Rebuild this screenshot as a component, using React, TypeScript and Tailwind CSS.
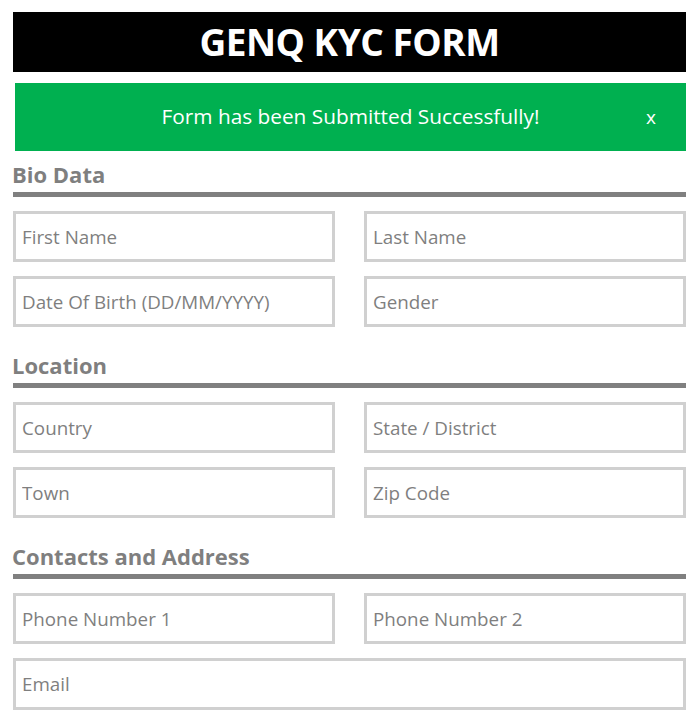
import React, { useState } from "react";

const Field: React.FC<{ placeholder: string; className?: string }> = ({ placeholder, className }) => (
  <input
    type="text"
    placeholder={placeholder}
    className={
      "h-[51px] w-full border-[3px] border-[#d0d0d0] bg-white px-[6px] text-[18.8px] text-[#595959] placeholder:text-[#7f7f7f] outline-none " +
      (className ?? "")
    }
  />
);

const Section: React.FC<{ title: string; children: React.ReactNode }> = ({ title, children }) => (
  <div>
    <h2 className="-ml-[1px] text-[22px] font-bold leading-[28px] text-[#7f7f7f]">{title}</h2>
    <div className="mt-[4px] h-[5px] bg-[#808080]" />
    <div className="mt-[14px] grid grid-cols-2 gap-x-[29px] gap-y-[14px]">{children}</div>
  </div>
);

const App: React.FC = () => {
  const [showAlert, setShowAlert] = useState(true);

  return (
    <div className="w-[699px] bg-white px-[13px] pt-[12px] pb-[10px]" style={{ fontFamily: '"Open Sans", sans-serif' }}>
      <div className="flex h-[60px] items-center justify-center bg-black">
        <h1 className="text-[37px] font-bold tracking-[-0.5px] text-white">GENQ KYC FORM</h1>
      </div>

      {showAlert && (
        <div className="relative mt-[11px] ml-[2px] flex h-[68px] items-center justify-center bg-[#00b050]">
          <span className="text-[20.8px] text-white">Form has been Submitted Successfully!</span>
          <button
            onClick={() => setShowAlert(false)}
            className="absolute right-[30px] top-[20px] text-[19px] text-white"
          >
            x
          </button>
        </div>
      )}

      <div className="mt-[9px] flex flex-col gap-[24px]">
        <Section title="Bio Data">
          <Field placeholder="First Name" />
          <Field placeholder="Last Name" />
          <Field placeholder="Date Of Birth (DD/MM/YYYY)" />
          <Field placeholder="Gender" />
        </Section>

        <Section title="Location">
          <Field placeholder="Country" />
          <Field placeholder="State / District" />
          <Field placeholder="Town" />
          <Field placeholder="Zip Code" />
        </Section>

        <Section title="Contacts and Address">
          <Field placeholder="Phone Number 1" />
          <Field placeholder="Phone Number 2" />
          <Field placeholder="Email" className="col-span-2 h-[52px]" />
        </Section>
      </div>
    </div>
  );
};

export default App;
